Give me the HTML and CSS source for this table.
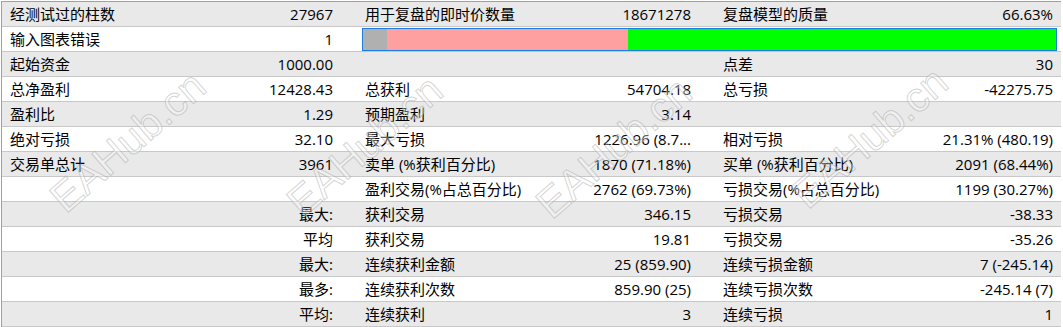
FILE: index.html
```html
<!DOCTYPE html>
<html lang="zh-CN">
<head>
<meta charset="utf-8">
<title>复盘报告</title>
<link rel="stylesheet" href="styles.css">
</head>
<body>
<div class="report">
  <div class="row gray">
    <div class="lab">经测试过的柱数</div><div class="val">27967</div>
    <div class="lab">用于复盘的即时价数量</div><div class="val">18671278</div>
    <div class="lab">复盘模型的质量</div><div class="val last">66.63%</div>
  </div>
  <div class="row white">
    <div class="lab">输入图表错误</div><div class="val">1</div>
    <div class="barcell">
      <div class="bar">
        <div class="seg s-gray" style="width:24px"></div>
        <div class="seg s-pink" style="width:241px"></div>
        <div class="seg s-green"></div>
      </div>
    </div>
  </div>
  <div class="row gray">
    <div class="lab">起始资金</div><div class="val">1000.00</div>
    <div class="lab"></div><div class="val"></div>
    <div class="lab">点差</div><div class="val last">30</div>
  </div>
  <div class="row white">
    <div class="lab">总净盈利</div><div class="val">12428.43</div>
    <div class="lab">总获利</div><div class="val">54704.18</div>
    <div class="lab">总亏损</div><div class="val last">-42275.75</div>
  </div>
  <div class="row gray">
    <div class="lab">盈利比</div><div class="val">1.29</div>
    <div class="lab">预期盈利</div><div class="val">3.14</div>
    <div class="lab"></div><div class="val last"></div>
  </div>
  <div class="row white">
    <div class="lab">绝对亏损</div><div class="val">32.10</div>
    <div class="lab">最大亏损</div><div class="val">1226.96 (8.7...</div>
    <div class="lab">相对亏损</div><div class="val last">21.31% (480.19)</div>
  </div>
  <div class="row gray">
    <div class="lab">交易单总计</div><div class="val">3961</div>
    <div class="lab">卖单 (%获利百分比)</div><div class="val">1870 (71.18%)</div>
    <div class="lab">买单 (%获利百分比)</div><div class="val last">2091 (68.44%)</div>
  </div>
  <div class="row white">
    <div class="lab"></div><div class="val"></div>
    <div class="lab">盈利交易(%占总百分比)</div><div class="val">2762 (69.73%)</div>
    <div class="lab">亏损交易(%占总百分比)</div><div class="val last">1199 (30.27%)</div>
  </div>
  <div class="row gray">
    <div class="lab"></div><div class="val">最大:</div>
    <div class="lab">获利交易</div><div class="val">346.15</div>
    <div class="lab">亏损交易</div><div class="val last">-38.33</div>
  </div>
  <div class="row white">
    <div class="lab"></div><div class="val">平均</div>
    <div class="lab">获利交易</div><div class="val">19.81</div>
    <div class="lab">亏损交易</div><div class="val last">-35.26</div>
  </div>
  <div class="row gray">
    <div class="lab"></div><div class="val">最大:</div>
    <div class="lab">连续获利金额</div><div class="val">25 (859.90)</div>
    <div class="lab">连续亏损金额</div><div class="val last">7 (-245.14)</div>
  </div>
  <div class="row white">
    <div class="lab"></div><div class="val">最多:</div>
    <div class="lab">连续获利次数</div><div class="val">859.90 (25)</div>
    <div class="lab">连续亏损次数</div><div class="val last">-245.14 (7)</div>
  </div>
  <div class="row gray">
    <div class="lab"></div><div class="val">平均:</div>
    <div class="lab">连续获利</div><div class="val">3</div>
    <div class="lab">连续亏损</div><div class="val last">1</div>
  </div>
</div>
<div class="watermarks" aria-hidden="true">
  <span class="wm" style="left:128px;top:142px">EAHub.cn</span>
  <span class="wm" style="left:365px;top:146px">EAHub.cn</span>
  <span class="wm" style="left:614px;top:148px">EAHub.cn</span>
  <span class="wm" style="left:870px;top:138px">EAHub.cn</span>
</div>
</body>
</html>
```
FILE: styles.css
```css
html, body {
  margin: 0;
  padding: 0;
  background: #ffffff;
}
body {
  position: relative;
  width: 1063px;
  height: 327px;
  overflow: hidden;
  font-family: "Open Sans", "Noto Sans CJK SC", sans-serif;
  font-size: 15px;
  color: #000000;
}
.report {
  margin: 1px 0 0 1px;
  width: 1059px;
  border-top: 1px solid #a0a0a0;
  border-left: 1px solid #a0a0a0;
}
.row {
  display: grid;
  grid-template-columns: 176px 179px 180px 178px 178px 167px;
  height: 24px;
  border-bottom: 1px solid #c8c8c8;
  line-height: 24px;
}
.row.gray { background: #e9e9e9; }
.row.white { background: #ffffff; }
.lab {
  padding-left: 8px;
  white-space: nowrap;
  overflow: hidden;
}
.val {
  padding-right: 24px;
  text-align: right;
  white-space: nowrap;
  overflow: hidden;
}
.val.last { padding-right: 7px; }
.barcell {
  grid-column: 3 / 7;
  display: flex;
  align-items: center;
  padding: 0 3px 0 5px;
}
.bar {
  flex: 1;
  height: 21px;
  display: flex;
  border: 1px solid #1a7fe0;
}
.seg { height: 100%; }
.s-gray { background: #b0b0b0; }
.s-pink { background: #ffa0a0; }
.s-green { flex: 1; background: #00ff00; }
.watermarks {
  position: absolute;
  left: 0;
  top: 0;
  width: 1063px;
  height: 327px;
  pointer-events: none;
  overflow: hidden;
}
.wm {
  position: absolute;
  font-family: "Liberation Sans", sans-serif;
  font-size: 42px;
  line-height: 1;
  white-space: nowrap;
  color: rgba(255, 255, 255, 0.35);
  -webkit-text-stroke: 1px rgba(160, 160, 160, 0.45);
  transform: translate(-50%, -50%) rotate(-41deg);
}
```
